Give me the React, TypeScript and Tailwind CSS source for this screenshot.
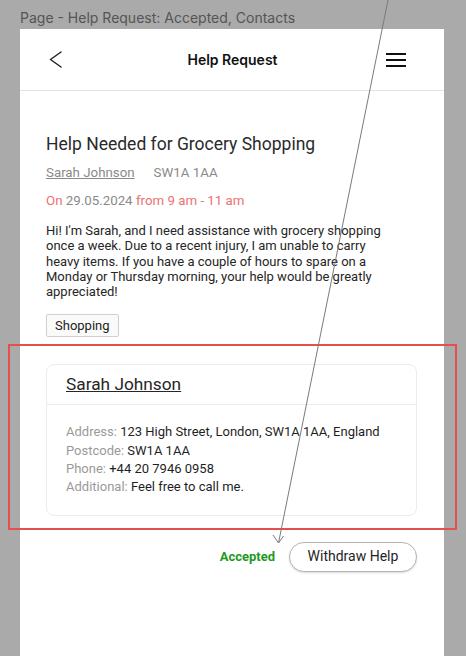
const contactRows = [
  { label: 'Address:', value: '123 High Street, London, SW1A 1AA, England' },
  { label: 'Postcode:', value: 'SW1A 1AA' },
  { label: 'Phone:', value: '+44 20 7946 0958' },
  { label: 'Additional:', value: 'Feel free to call me.' },
]

const App = () => {
  return (
    <div className="relative w-[466px] h-[656px] bg-[#aaaaaa] overflow-hidden flex flex-col font-['Roboto',sans-serif]">
      {/* Frame label */}
      <div className="h-[29px] px-[20px] pt-[9px] text-[14px] leading-[18px] text-[#555555] font-['Inter',sans-serif] shrink-0">
        Page - Help Request: Accepted, Contacts
      </div>

      {/* Phone screen */}
      <div className="ml-[20px] w-[424px] flex-1 bg-white flex flex-col">
        {/* Header */}
        <div className="h-[62px] border-b border-[#e3e3e3] flex items-center justify-between pl-[29px] pr-[38px] shrink-0">
          <svg width="13" height="17" viewBox="0 0 13 17" fill="none">
            <path d="M12 1 L1.5 8.5 L12 16" stroke="#222222" strokeWidth="1.5" strokeLinecap="round" strokeLinejoin="round" />
          </svg>
          <span className="text-[14px] font-semibold text-[#111111] font-['Inter',sans-serif] pl-[17px]">Help Request</span>
          <div className="flex flex-col gap-[4px] w-[20px]">
            <div className="h-[2px] bg-[#111111]" />
            <div className="h-[2px] bg-[#111111]" />
            <div className="h-[2px] bg-[#111111]" />
          </div>
        </div>

        {/* Content */}
        <div className="px-[26px] pt-[41px] flex flex-col">
          <h1 className="text-[17.5px] leading-[24px] text-[#2a2a2a]">Help Needed for Grocery Shopping</h1>

          <div className="mt-[8px] flex gap-[19px] text-[13.3px] leading-[18px] text-[#8a8a8a]">
            <span className="underline">Sarah Johnson</span>
            <span>SW1A 1AA</span>
          </div>

          <div className="mt-[10px] text-[13.3px] leading-[18px] text-[#ec7272]">
            On <span className="text-[#8a8a8a]">29.05.2024</span> from 9 am - 11 am
          </div>

          <p className="mt-[13px] w-[350px] text-[13px] leading-[15.3px] text-[#262626]">
            Hi! I'm Sarah, and I need assistance with grocery shopping once a week. Due to a recent injury, I am unable to carry heavy items. If you have a couple of hours to spare on a Monday or Thursday morning, your help would be greatly appreciated!
          </p>

          <div className="mt-[15px] self-start h-[23px] px-[8px] flex items-center border border-[#d0d0d0] rounded-[2px] bg-[#fafafa] text-[13px] text-[#222222]">
            Shopping
          </div>

          {/* Contact card */}
          <div className="mt-[27px] w-[371px] border border-[#ececec] rounded-[8px] flex flex-col">
            <div className="h-[40px] px-[19px] flex items-center border-b border-[#ececec]">
              <span className="text-[17.3px] text-[#262626] underline">Sarah Johnson</span>
            </div>
            <div className="px-[19px] pt-[18px] pb-[18px] flex flex-col text-[13px] leading-[18.3px]">
              {contactRows.map((row) => (
                <div key={row.label}>
                  <span className="text-[#9a9a9a]">{row.label}</span>{' '}
                  <span className="text-[#1f1f1f]">{row.value}</span>
                </div>
              ))}
            </div>
          </div>

          {/* Actions */}
          <div className="mt-[26px] flex items-center justify-end gap-[14px] pr-[1px]">
            <span className="text-[13px] font-bold text-[#1f9a1f]">Accepted</span>
            <button className="w-[128px] h-[30px] rounded-full border border-[#b5b5b5] bg-white shadow-[0_1px_2px_rgba(0,0,0,0.15)] text-[14px] text-[#1f1f1f]">
              Withdraw Help
            </button>
          </div>
        </div>
      </div>

      {/* Annotation highlight */}
      <div className="absolute left-[8px] top-[344px] w-[449px] h-[186px] border-2 border-[#e45050] pointer-events-none" />

      {/* Annotation arrow */}
      <svg className="absolute inset-0 pointer-events-none" width="466" height="656" viewBox="0 0 466 656">
        <line x1="388" y1="0" x2="278.5" y2="543" stroke="#7a7a7a" strokeWidth="1" />
        <path d="M273 535 L278.5 543 L283.5 536" fill="none" stroke="#7a7a7a" strokeWidth="1" />
      </svg>
    </div>
  )
}

export default App
